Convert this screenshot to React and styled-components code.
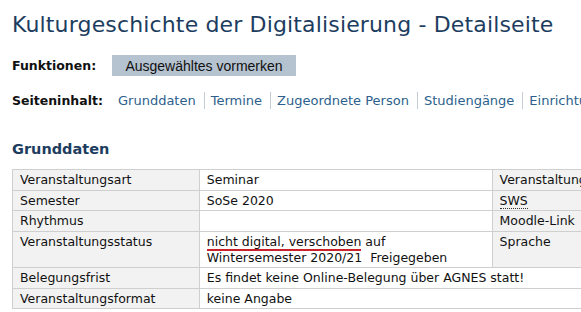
import React from 'react';
import styled, { createGlobalStyle } from 'styled-components';

const GlobalStyle = createGlobalStyle`
  html, body {
    margin: 0;
    padding: 0;
    background: #fff;
    overflow: hidden;
  }
  body {
    font-family: "DejaVu Sans", Verdana, sans-serif;
    font-size: 12.5px;
    color: #111;
  }
`;

const Page = styled.div`
  padding: 0 0 0 12px;
  width: 760px;
`;

const Title = styled.h1`
  margin: 0;
  padding-top: 11px;
  font-size: 22px;
  font-weight: normal;
  line-height: 28px;
  color: #1d3d60;
  letter-spacing: 0.15px;
`;

const Row = styled.div`
  display: flex;
  align-items: center;
  margin-top: ${(p) => p.$top}px;
  white-space: nowrap;
`;

const Label = styled.span`
  font-weight: bold;
  font-size: 12.5px;
  width: ${(p) => p.$width}px;
  flex-shrink: 0;
`;

const Button = styled.button`
  border: none;
  background: #b5c2cf;
  height: 21px;
  width: 184px;
  padding: 0;
  font-family: "Liberation Sans", Arial, sans-serif;
  font-size: 14px;
  color: #111;
`;

const NavLink = styled.a`
  color: #2c5f8d;
  text-decoration: none;
  font-size: 13px;
  padding-right: 8px;
  padding-left: ${(p) => (p.$first ? 0 : 6)}px;
  border-left: ${(p) => (p.$first ? 'none' : '1px solid #c4ccd6')};
  line-height: 17px;
`;

const Heading = styled.h2`
  margin: 30px 0 0;
  font-size: 14.5px;
  font-weight: bold;
  color: #1d3d60;
  line-height: 20px;
`;

const Table = styled.table`
  margin-top: 10px;
  border-collapse: collapse;
  width: 760px;
`;

const Cell = styled.td`
  border: 1px solid #cfcfcf;
  padding: 2px 7px 1.5px;
  vertical-align: top;
  line-height: 16px;
  background: ${(p) => (p.$label ? '#f2f2f2' : '#fff')};
  width: ${(p) => p.$width || 'auto'};
  white-space: nowrap;
`;

const Abbr = styled.span`
  border-bottom: 1px dotted #333;
`;

const Marked = styled.span`
  border-bottom: 2px solid #c8232b;
`;

const links = ['Grunddaten', 'Termine', 'Zugeordnete Person', 'Studiengänge', 'Einrichtungen'];

const rows = [
  ['Veranstaltungsart', 'Seminar', 'Veranstaltungsnummer'],
  ['Semester', 'SoSe 2020', <Abbr key="s">SWS</Abbr>],
  ['Rhythmus', '', 'Moodle-Link'],
  [
    'Veranstaltungsstatus',
    <>
      <Marked>nicht digital, verschoben</Marked> auf
      <br />
      Wintersemester 2020/21&nbsp;&nbsp;Freigegeben
    </>,
    'Sprache',
  ],
  ['Belegungsfrist', 'Es findet keine Online-Belegung über AGNES statt!'],
  ['Veranstaltungsformat', 'keine Angabe'],
];

export default function App() {
  return (
    <Page>
      <GlobalStyle />
      <Title>Kulturgeschichte der Digitalisierung - Detailseite</Title>
      <Row $top={16}>
        <Label $width={100}>Funktionen:</Label>
        <Button>Ausgewähltes vormerken</Button>
      </Row>
      <Row $top={16}>
        <Label $width={106}>Seiteninhalt:</Label>
        {links.map((l, i) => (
          <NavLink key={l} href="#" $first={i === 0}>
            {l}
          </NavLink>
        ))}
      </Row>
      <Heading>Grunddaten</Heading>
      <Table>
        <tbody>
          {rows.map((r, i) => (
            <tr key={i}>
              <Cell $label $width="172px">{r[0]}</Cell>
              <Cell $width="278px" colSpan={r.length === 2 ? 3 : 1}>{r[1]}</Cell>
              {r.length === 3 && (
                <>
                  <Cell $label $width="150px">{r[2]}</Cell>
                  <Cell $width="100px"></Cell>
                </>
              )}
            </tr>
          ))}
        </tbody>
      </Table>
    </Page>
  );
}
